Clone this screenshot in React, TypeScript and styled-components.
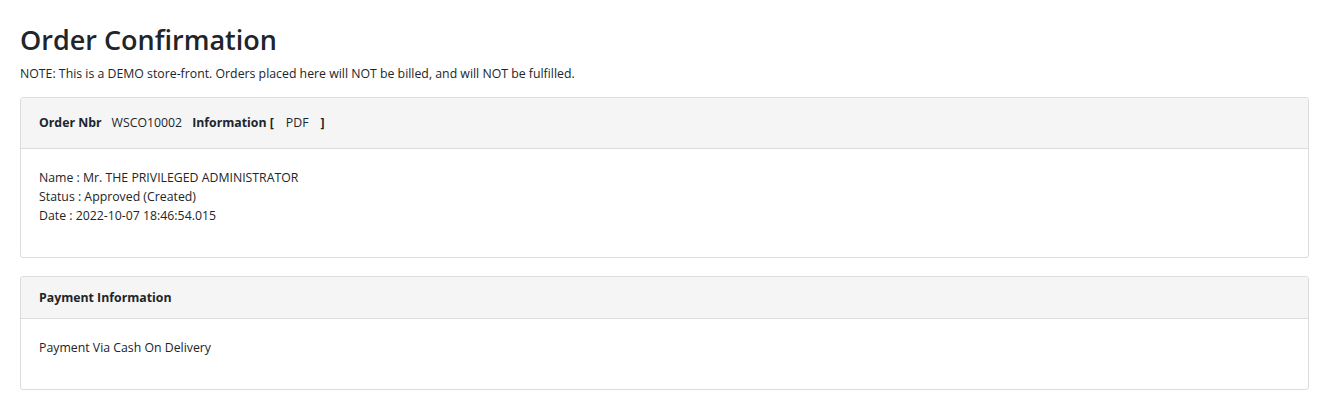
import React from "react";
import styled, { createGlobalStyle } from "styled-components";

const Global = createGlobalStyle`
  body { margin: 0; background: #fff; font-family: "Open Sans", "Noto Sans", sans-serif; color: #212529; }
`;

const Page = styled.div`
  padding: 22px 15px 0 20px;
`;

const Title = styled.h1`
  margin: 0;
  font-size: 27px;
  font-weight: 600;
  line-height: 36px;
  color: #212529;
`;

const Note = styled.p`
  margin: 7px 0 14px;
  font-size: 12.3px;
  line-height: 18px;
`;

const Card = styled.div`
  border: 1px solid #dcdcdc;
  border-radius: 3px;
  margin-bottom: 18px;
  overflow: hidden;
`;

const CardHeader = styled.div<{ $h: number }>`
  background: #f5f5f5;
  border-bottom: 1px solid #dcdcdc;
  height: ${(p) => p.$h}px;
  padding: 0 18px 1px;
  display: flex;
  align-items: center;
  font-size: 12.3px;
  box-sizing: border-box;
`;

const Bold = styled.span`
  font-weight: 700;
`;

const Plain = styled.span`
  margin: 0 10px;
`;

const Pdf = styled.span`
  margin: 0 12px;
`;

const CardBody = styled.div<{ $h: number }>`
  height: ${(p) => p.$h}px;
  padding: 19px 18px 0;
  font-size: 12.3px;
  line-height: 19px;
`;

export default function App() {
  return (
    <>
      <Global />
      <Page>
        <Title>Order Confirmation</Title>
        <Note>NOTE: This is a DEMO store-front. Orders placed here will NOT be billed, and will NOT be fulfilled.</Note>
        <Card>
          <CardHeader $h={51}>
            <Bold>Order Nbr</Bold>
            <Plain>WSCO10002</Plain>
            <Bold>Information [</Bold>
            <Pdf>PDF</Pdf>
            <Bold>]</Bold>
          </CardHeader>
          <CardBody $h={89}>
            <div>Name : Mr. THE PRIVILEGED ADMINISTRATOR</div>
            <div>Status : Approved (Created)</div>
            <div>Date : 2022-10-07 18:46:54.015</div>
          </CardBody>
        </Card>
        <Card>
          <CardHeader $h={42}>
            <Bold>Payment Information</Bold>
          </CardHeader>
          <CardBody $h={51}>
            <div>Payment Via Cash On Delivery</div>
          </CardBody>
        </Card>
      </Page>
    </>
  );
}
